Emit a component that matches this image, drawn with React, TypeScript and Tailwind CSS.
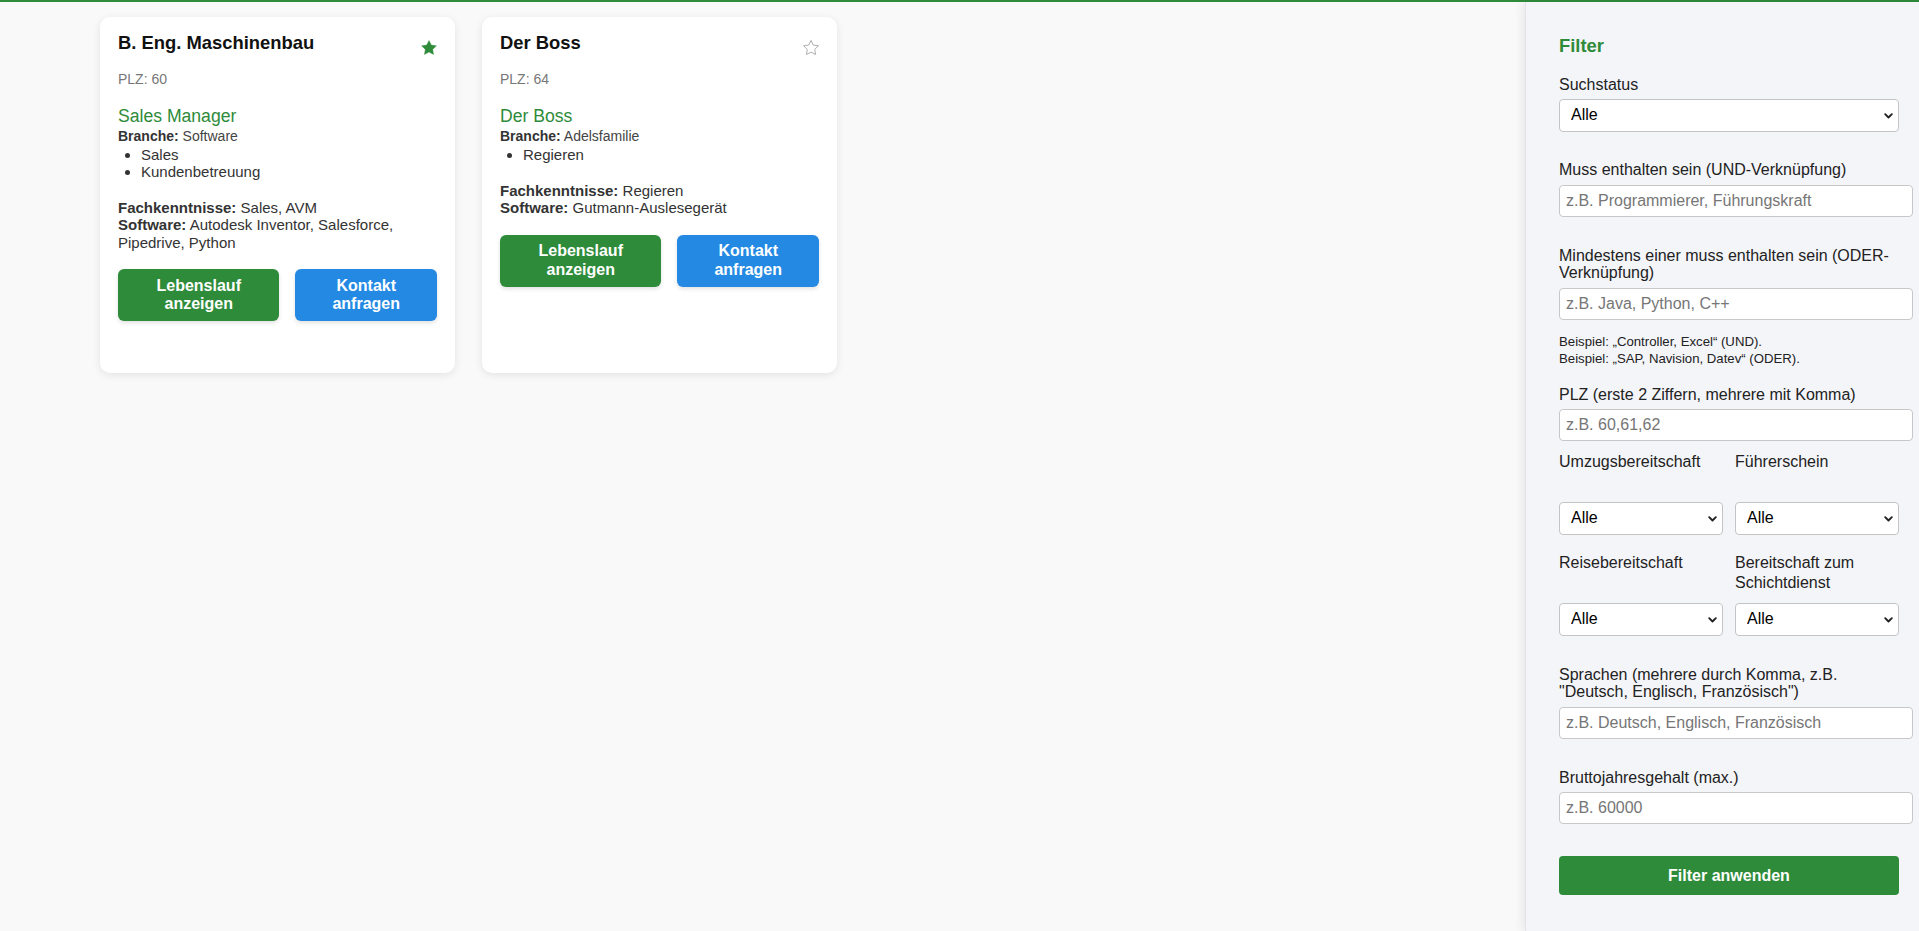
import React from 'react'

type Candidate = {
  title: string
  plz: string
  starred: boolean
  position: string
  branche: string
  tasks: string[]
  skills: string
  software: string
}

const candidates: Candidate[] = [
  {
    title: 'B. Eng. Maschinenbau',
    plz: '60',
    starred: true,
    position: 'Sales Manager',
    branche: 'Software',
    tasks: ['Sales', 'Kundenbetreuung'],
    skills: 'Sales, AVM',
    software: 'Autodesk Inventor, Salesforce, Pipedrive, Python',
  },
  {
    title: 'Der Boss',
    plz: '64',
    starred: false,
    position: 'Der Boss',
    branche: 'Adelsfamilie',
    tasks: ['Regieren'],
    skills: 'Regieren',
    software: 'Gutmann-Auslesegerät',
  },
]

function Star({ filled }: { filled: boolean }) {
  return (
    <svg width="16" height="15" viewBox="1.4 1.4 21.2 20.3" className="mt-[8px] shrink-0">
      <polygon
        points="12,2 15.09,8.26 22,9.27 17,14.14 18.18,21.02 12,17.77 5.82,21.02 7,14.14 2,9.27 8.91,8.26"
        fill={filled ? '#2e8b3a' : 'none'}
        stroke={filled ? '#2e8b3a' : '#a3a3a3'}
        strokeWidth={filled ? 0.5 : 1.2}
        strokeLinejoin="round"
      />
    </svg>
  )
}

function CandidateCard({ c }: { c: Candidate }) {
  return (
    <div className="h-[356px] rounded-[10px] bg-white px-[18px] pt-[14.5px] shadow-[0_2px_8px_rgba(0,0,0,0.09)]">
      <div className="flex items-start justify-between">
        <h3 className="text-[18.4px] leading-[21px] font-bold text-[#111]">{c.title}</h3>
        <Star filled={c.starred} />
      </div>
      <p className="mt-[16px] text-[14px] leading-[16px] text-[#777]">PLZ: {c.plz}</p>
      <p className="mt-[19px] text-[17.6px] leading-[20px] text-[#2e8b3a]">{c.position}</p>
      <p className="mt-[2px] text-[14px] leading-[16px] text-[#444]">
        <span className="font-bold text-[#333]">Branche:</span> {c.branche}
      </p>
      <ul className="mt-[2.5px] list-disc pl-[23px] text-[15px] leading-[17.25px] text-[#333]">
        {c.tasks.map((t) => (
          <li key={t}>{t}</li>
        ))}
      </ul>
      <div className="mt-[18.5px] text-[15px] leading-[17.25px] text-[#333]">
        <p>
          <span className="font-bold">Fachkenntnisse:</span> {c.skills}
        </p>
        <p>
          <span className="font-bold">Software:</span> {c.software}
        </p>
      </div>
      <div className="mt-[18.5px] flex gap-[16px]">
        <button className="w-[162px] rounded-[6px] bg-[#2e8b3a] py-[7.5px] text-[16px] leading-[18.4px] font-bold text-white shadow-[0_2px_4px_rgba(0,0,0,0.12)]">
          Lebenslauf
          <br />
          anzeigen
        </button>
        <button className="w-[142px] rounded-[6px] bg-[#2389e3] py-[7.5px] text-[16px] leading-[18.4px] font-bold text-white shadow-[0_2px_4px_rgba(0,0,0,0.12)]">
          Kontakt
          <br />
          anfragen
        </button>
      </div>
    </div>
  )
}

function Select({ className = '' }: { className?: string }) {
  return (
    <div className={`relative ${className}`}>
      <select className="h-[33px] w-full appearance-none rounded-[4px] border border-[#c4c4c4] bg-white pl-[11px] text-[16px] text-black outline-none">
        <option>Alle</option>
      </select>
      <svg
        width="9"
        height="6"
        viewBox="0 0 9 6"
        className="pointer-events-none absolute top-[14px] right-[6px]"
      >
        <path d="M1.2 1.2 L4.5 4.5 L7.8 1.2" fill="none" stroke="#222" strokeWidth="1.9" strokeLinecap="round" strokeLinejoin="round" />
      </svg>
    </div>
  )
}

function TextInput({ placeholder, className = '' }: { placeholder: string; className?: string }) {
  return (
    <input
      placeholder={placeholder}
      className={`block h-[32px] w-[354px] rounded-[4px] border border-[#c8c8c8] bg-white px-[6px] text-[16px] text-black outline-none placeholder:text-[#767676] ${className}`}
    />
  )
}

const label = 'block text-[16px] leading-[17.3px] text-[#222]'
const gridLabel = 'block h-[41px] text-[16px] leading-[20.4px] text-[#222]'

function FilterPanel() {
  return (
    <aside className="min-h-[929px] w-[394px] shrink-0 border-l border-[#e4e4e8] bg-[#f4f5f9] pt-[32.5px] pr-[21px] pl-[33px] shadow-[-3px_0_8px_rgba(0,0,0,0.07)]">
      <h3 className="text-[18.4px] leading-[21px] font-bold text-[#2e8b3a]">Filter</h3>

      <label className={`${label} mt-[20px]`}>Suchstatus</label>
      <Select className="mt-[6px] w-[340px]" />

      <label className={`${label} mt-[29px]`}>Muss enthalten sein (UND-Verknüpfung)</label>
      <TextInput className="mt-[7px]" placeholder="z.B. Programmierer, Führungskraft" />

      <label className={`${label} mt-[30px] w-[340px]`}>
        Mindestens einer muss enthalten sein (ODER-Verknüpfung)
      </label>
      <TextInput className="mt-[6px]" placeholder="z.B. Java, Python, C++" />
      <p className="mt-[13px] text-[13.2px] leading-[17.3px] text-[#222]">
        Beispiel: „Controller, Excel“ (UND).
        <br />
        Beispiel: „SAP, Navision, Datev“ (ODER).
      </p>

      <label className={`${label} mt-[19px]`}>PLZ (erste 2 Ziffern, mehrere mit Komma)</label>
      <TextInput className="mt-[5px]" placeholder="z.B. 60,61,62" />

      <div className="mt-[11px] grid w-[340px] grid-cols-2 gap-x-[12px] gap-y-[18px]">
        <div>
          <span className={gridLabel}>Umzugsbereitschaft</span>
          <Select className="mt-[9px]" />
        </div>
        <div>
          <span className={gridLabel}>Führerschein</span>
          <Select className="mt-[9px]" />
        </div>
        <div>
          <span className={gridLabel}>Reisebereitschaft</span>
          <Select className="mt-[9px]" />
        </div>
        <div>
          <span className={gridLabel}>Bereitschaft zum Schichtdienst</span>
          <Select className="mt-[9px]" />
        </div>
      </div>

      <label className={`${label} mt-[30px] w-[340px]`}>
        Sprachen (mehrere durch Komma, z.B. "Deutsch, Englisch, Französisch")
      </label>
      <TextInput className="mt-[7px] h-[31px]" placeholder="z.B. Deutsch, Englisch, Französisch" />

      <label className={`${label} mt-[30px]`}>Bruttojahresgehalt (max.)</label>
      <TextInput className="mt-[6px] h-[31px]" placeholder="z.B. 60000" />

      <button className="mt-[32px] h-[39px] w-[340px] rounded-[4px] bg-[#2e8b3a] text-[16px] font-bold text-white">
        Filter anwenden
      </button>
    </aside>
  )
}

export default function App() {
  return (
    <div className="min-h-screen border-t-2 border-[#2e8b3a] bg-[#f9f9f9] font-['Liberation_Sans',Arial,sans-serif]">
      <div className="flex">
        <main className="flex-1 pt-[15px] pl-[100px]">
          <div className="grid grid-cols-[355px_355px] items-start gap-[27px]">
            {candidates.map((c) => (
              <CandidateCard key={c.title} c={c} />
            ))}
          </div>
        </main>
        <FilterPanel />
      </div>
    </div>
  )
}
